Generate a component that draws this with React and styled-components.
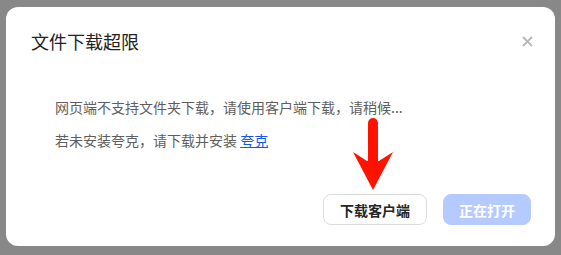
import React from "react";
import styled, { createGlobalStyle } from "styled-components";

const GlobalStyle = createGlobalStyle`
  html, body {
    margin: 0;
    padding: 0;
    background: #888888;
  }
  body {
    font-family: "Noto Sans CJK SC", "Noto Sans", sans-serif;
  }
`;

const Page = styled.div`
  width: 561px;
  height: 255px;
  box-sizing: border-box;
  padding: 7px 6px 9px 6px;
`;

const Dialog = styled.div`
  position: relative;
  width: 549px;
  height: 239px;
  background: #ffffff;
  border-radius: 12px;
  display: flex;
  flex-direction: column;
  box-sizing: border-box;
`;

const Header = styled.div`
  display: flex;
  align-items: center;
  justify-content: space-between;
  padding: 22px 21px 0 25px;
`;

const Title = styled.div`
  font-size: 18px;
  line-height: 24px;
  color: #222222;
`;

const CloseButton = styled.button`
  width: 14px;
  height: 14px;
  padding: 0;
  border: none;
  background: none;
  display: flex;
  align-items: center;
  justify-content: center;
  cursor: pointer;
`;

const Body = styled.div`
  flex: 1;
  display: flex;
  flex-direction: column;
  gap: 13px;
  padding: 44px 0 0 49px;
`;

const Line = styled.p`
  margin: 0;
  font-size: 14px;
  line-height: 20px;
  color: #5e5e5e;
`;

const Link = styled.a`
  color: #1456f0;
  text-decoration: underline;
  cursor: pointer;
`;

const Footer = styled.div`
  display: flex;
  justify-content: flex-end;
  gap: 16px;
  padding: 0 24px 21px 0;
`;

const Button = styled.button`
  height: 31px;
  width: ${(p) => p.$w}px;
  box-sizing: border-box;
  border-radius: 8px;
  font-family: inherit;
  font-size: 14px;
  font-weight: 700;
  border: 1px solid ${(p) => (p.$primary ? "#b5cbff" : "#dcdcdc")};
  background: ${(p) => (p.$primary ? "#b5cbff" : "#ffffff")};
  color: ${(p) => (p.$primary ? "#ffffff" : "#262626")};
  cursor: pointer;
`;

const Arrow = styled.svg`
  position: absolute;
  left: 344px;
  top: 105px;
`;

const App = () => {
  return (
    <Page>
      <GlobalStyle />
      <Dialog>
        <Header>
          <Title>文件下载超限</Title>
          <CloseButton>
            <svg width="11" height="11" viewBox="0 0 11 11">
              <path d="M1 1L10 10M10 1L1 10" stroke="#b8b8b8" strokeWidth="1.8" />
            </svg>
          </CloseButton>
        </Header>
        <Body>
          <Line>网页端不支持文件夹下载，请使用客户端下载，请稍候...</Line>
          <Line>
            若未安装夸克，请下载并安装 <Link>夸克</Link>
          </Line>
        </Body>
        <Footer>
          <Button $w={104}>下载客户端</Button>
          <Button $w={88} $primary>
            正在打开
          </Button>
        </Footer>
        {/* red pointer drawn over the dialog */}
        <Arrow width="46" height="80" viewBox="0 0 46 80">
          <line x1="23" y1="11" x2="23" y2="52" stroke="#ff1200" strokeWidth="10" strokeLinecap="round" />
          <polygon points="3,40 23,78 43,40 29,49 17,49" fill="#ff1200" />
        </Arrow>
      </Dialog>
    </Page>
  );
};

export default App;
